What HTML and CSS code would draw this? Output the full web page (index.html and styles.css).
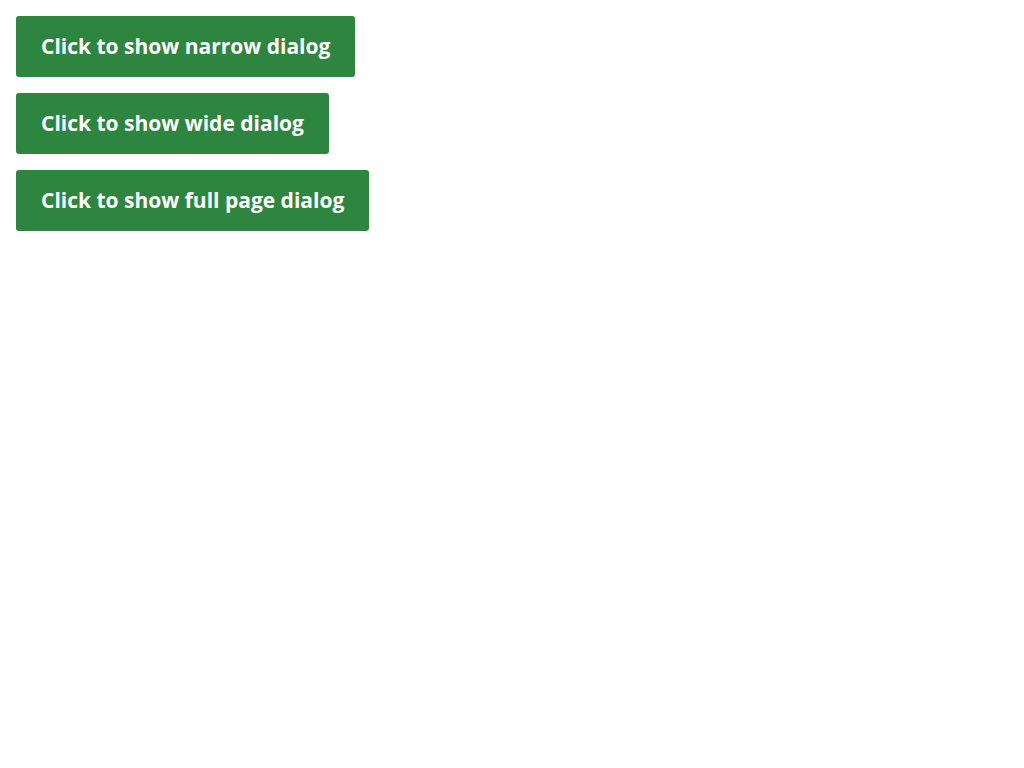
FILE: index.html
```html
<!DOCTYPE html>
<html>
<head>
<meta charset="utf-8">
<link rel="stylesheet" href="styles.css">
</head>
<body>
<div class="stack">
  <button class="btn">Click to show narrow dialog</button>
  <button class="btn">Click to show wide dialog</button>
  <button class="btn">Click to show full page dialog</button>
</div>
</body>
</html>
```
FILE: styles.css
```css
html, body {
  margin: 0;
  background: #ffffff;
}
.stack {
  display: flex;
  flex-direction: column;
  align-items: flex-start;
  gap: 16px;
  padding: 16px;
}
.btn {
  font-family: "Open Sans", sans-serif;
  font-weight: 700;
  font-size: 21px;
  line-height: 31px;
  color: #ffffff;
  background: #2e8540;
  border: none;
  border-radius: 3px;
  padding: 15px 25px;
  margin: 0;
  cursor: pointer;
}
```
